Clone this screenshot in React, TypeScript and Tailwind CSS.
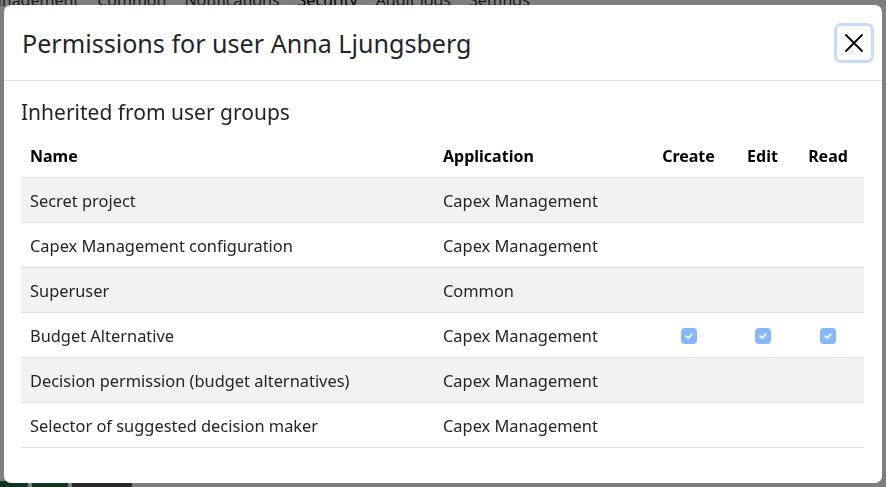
import React from 'react';

interface PermissionRow {
  name: string;
  application: string;
  create: boolean;
  edit: boolean;
  read: boolean;
}

const rows: PermissionRow[] = [
  { name: 'Secret project', application: 'Capex Management', create: false, edit: false, read: false },
  { name: 'Capex Management configuration', application: 'Capex Management', create: false, edit: false, read: false },
  { name: 'Superuser', application: 'Common', create: false, edit: false, read: false },
  { name: 'Budget Alternative', application: 'Capex Management', create: true, edit: true, read: true },
  { name: 'Decision permission (budget alternatives)', application: 'Capex Management', create: false, edit: false, read: false },
  { name: 'Selector of suggested decision maker', application: 'Capex Management', create: false, edit: false, read: false },
];

const navItems = ['Capex Management', 'Common', 'Notifications', 'Security', 'Audit logs', 'Settings'];

const CheckedBox = () => (
  <span className="inline-flex w-4 h-4 items-center justify-center rounded-[4px] bg-[#86b7fe] align-middle">
    <svg width="10" height="10" viewBox="0 0 10 10" fill="none">
      <path d="M2.2 5.2 L4.2 7.1 L7.9 3.1" stroke="white" strokeWidth="1.8" strokeLinecap="round" strokeLinejoin="round" />
    </svg>
  </span>
);

export default function App() {
  return (
    <div className="relative w-[886px] h-[487px] overflow-hidden bg-white font-['Noto_Sans',sans-serif] text-[#212529]">
      {/* page behind the dialog */}
      <div className="flex gap-[18px] -mt-[12px] -ml-[72px] text-[16px] text-[#333]">
        {navItems.map((item) => (
          <span key={item} className={item === 'Security' ? 'text-black' : ''}>
            {item}
          </span>
        ))}
      </div>
      <div className="absolute bottom-0 left-0 flex gap-1 h-[6px]">
        <span className="w-[28px] bg-[#1d6b3a]" />
        <span className="w-[36px] bg-[#1d6b3a]" />
        <span className="w-[60px] bg-[#555]" />
      </div>

      {/* backdrop + dialog */}
      <div className="fixed inset-0 bg-black/50 pt-[5px] pl-[4px]">
        <div className="w-[878px] h-[478px] bg-white rounded-[7px] flex flex-col">
          <div className="h-[76px] flex items-center justify-between pl-[18px] pr-[8px] border-b border-[#dee2e6]">
            <h2 className="text-[25.1px] leading-none pt-[2px] text-[#212529]">Permissions for user Anna Ljungsberg</h2>
            <button className="w-[40px] h-[40px] flex items-center justify-center rounded-[7px] border-[3px] border-[#c2dbfe] text-black">
              <svg width="20" height="20" viewBox="0 0 20 20" fill="none">
                <path d="M2 2 L18 18 M18 2 L2 18" stroke="black" strokeWidth="1.8" strokeLinecap="round" />
              </svg>
            </button>
          </div>

          <div className="px-[17px] pt-[19px]">
            <h3 className="text-[21px] leading-[24px] mb-[9px] text-[#212529]">Inherited from user groups</h3>
            <table className="w-[843px] table-fixed border-collapse text-[16.4px]">
              <colgroup>
                <col className="w-[413px]" />
                <col className="w-[210px]" />
                <col className="w-[89px]" />
                <col className="w-[59px]" />
                <col className="w-[72px]" />
              </colgroup>
              <thead>
                <tr className="h-[44px] border-b border-[#dee2e6] text-black text-[16px]">
                  <th className="text-left font-bold pl-[9px] pt-[2px]">Name</th>
                  <th className="text-left font-bold pl-[9px] pt-[2px]">Application</th>
                  <th className="text-center font-bold pt-[2px]">Create</th>
                  <th className="text-center font-bold pt-[2px]">Edit</th>
                  <th className="text-center font-bold pt-[2px]">Read</th>
                </tr>
              </thead>
              <tbody>
                {rows.map((row, i) => (
                  <tr key={row.name} className={`h-[45px] border-b border-[#dee2e6] ${i % 2 === 0 ? 'bg-[#f2f2f2]' : 'bg-white'}`}>
                    <td className="pl-[9px] pt-[3px]">{row.name}</td>
                    <td className="pl-[9px] pt-[3px]">{row.application}</td>
                    <td className="text-center">{row.create && <CheckedBox />}</td>
                    <td className="text-center">{row.edit && <CheckedBox />}</td>
                    <td className="text-center">{row.read && <CheckedBox />}</td>
                  </tr>
                ))}
              </tbody>
            </table>
          </div>
        </div>
      </div>
    </div>
  );
}
